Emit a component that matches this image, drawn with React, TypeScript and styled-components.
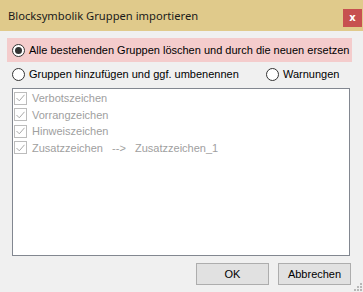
import React from 'react';
import styled, { createGlobalStyle } from 'styled-components';

const GlobalStyle = createGlobalStyle`
  html, body {
    margin: 0;
    padding: 0;
    background: #f0f0f0;
  }
  * {
    box-sizing: border-box;
  }
`;

const Window = styled.div`
  position: relative;
  width: 363px;
  height: 292px;
  display: flex;
  flex-direction: column;
  background: #f0f0f0;
  font-family: 'Liberation Sans', Arial, sans-serif;
  font-size: 11px;
  color: #000;
  overflow: hidden;
`;

const TitleBar = styled.div`
  height: 31px;
  display: flex;
  align-items: center;
  justify-content: space-between;
  padding-left: 8px;
  padding-right: 1px;
  background: #e0ca8b;
`;

const Title = styled.span`
  font-family: 'Noto Sans', 'Open Sans', sans-serif;
  font-size: 11.2px;
  color: #1a1a1a;
  margin-top: -1px;
`;

const CloseButton = styled.button`
  width: 19px;
  height: 18px;
  margin-top: 5px;
  border: none;
  padding: 0;
  background: #c75050;
  color: #fff;
  font-family: 'DejaVu Sans', sans-serif;
  font-weight: bold;
  font-size: 10px;
  line-height: 18px;
  text-align: center;
`;

const Body = styled.div`
  flex: 1;
  display: flex;
  flex-direction: column;
  padding: 7px 11px 0 7px;
`;

const OptionRow = styled.div<{ $highlight?: boolean }>`
  height: 24px;
  display: flex;
  align-items: center;
  padding-left: 5px;
  background: ${(p) => (p.$highlight ? '#f4cccc' : 'transparent')};
`;

const RadioLabel = styled.label<{ $width?: number }>`
  display: flex;
  align-items: center;
  gap: 4px;
  white-space: nowrap;
  width: ${(p) => (p.$width ? `${p.$width}px` : 'auto')};
`;

const RadioCircle = styled.span<{ $checked?: boolean }>`
  width: 13px;
  height: 13px;
  flex: none;
  border-radius: 50%;
  border: 1px solid #333;
  background: #fff;
  display: flex;
  align-items: center;
  justify-content: center;
  &::after {
    content: '';
    width: 7px;
    height: 7px;
    border-radius: 50%;
    background: ${(p) => (p.$checked ? '#333' : 'transparent')};
  }
`;

const ListBox = styled.div`
  margin-top: 2px;
  margin-left: 5px;
  width: 338px;
  height: 168px;
  border: 1px solid #828790;
  background: #fff;
  padding: 1px 0 0 1px;
  display: flex;
  flex-direction: column;
`;

const ListItem = styled.div`
  height: 16.5px;
  display: flex;
  align-items: center;
  gap: 5px;
  color: #a0a0a0;
  white-space: pre;
`;

const CheckBox = styled.span`
  width: 13px;
  height: 13px;
  flex: none;
  border: 1px solid #bcbcbc;
  background: #fff;
  display: flex;
  align-items: center;
  justify-content: center;
`;

const ButtonRow = styled.div`
  display: flex;
  justify-content: flex-end;
  gap: 9px;
  margin-top: 7px;
  padding-right: 1px;
`;

const DialogButton = styled.button`
  width: 73px;
  height: 22px;
  border: 1px solid #adadad;
  background: #e1e1e1;
  font-family: 'Liberation Sans', Arial, sans-serif;
  font-size: 11px;
  color: #000;
  padding: 0;
`;

const Grip = styled.svg`
  position: absolute;
  right: 1px;
  bottom: 1px;
`;

const RadioOption = ({
  label,
  checked,
  width,
}: {
  label: string;
  checked?: boolean;
  width?: number;
}) => (
  <RadioLabel $width={width}>
    <RadioCircle $checked={checked} />
    {label}
  </RadioLabel>
);

const items = [
  'Verbotszeichen',
  'Vorrangzeichen',
  'Hinweiszeichen',
  'Zusatzzeichen   -->   Zusatzzeichen_1',
];

export default function App() {
  return (
    <>
      <GlobalStyle />
      <Window>
        <TitleBar>
          <Title>Blocksymbolik Gruppen importieren</Title>
          <CloseButton>x</CloseButton>
        </TitleBar>
        <Body>
          <OptionRow $highlight>
            <RadioOption
              label="Alle bestehenden Gruppen löschen und durch die neuen ersetzen"
              checked
            />
          </OptionRow>
          <OptionRow>
            <RadioOption label="Gruppen hinzufügen und ggf. umbenennen" width={254} />
            <RadioOption label="Warnungen" />
          </OptionRow>
          <ListBox>
            {items.map((item) => (
              <ListItem key={item}>
                <CheckBox>
                  <svg width="9" height="8" viewBox="0 0 9 8">
                    <path d="M0.5 4 L3.3 6.8 L8.5 0.8" fill="none" stroke="#a8a8a8" strokeWidth="1" />
                  </svg>
                </CheckBox>
                {item}
              </ListItem>
            ))}
          </ListBox>
          <ButtonRow>
            <DialogButton>OK</DialogButton>
            <DialogButton>Abbrechen</DialogButton>
          </ButtonRow>
        </Body>
        <Grip width="10" height="10" viewBox="0 0 10 10">
          {[
            [8, 2],
            [8, 5],
            [8, 8],
            [5, 5],
            [5, 8],
            [2, 8],
          ].map(([x, y]) => (
            <rect key={`${x}-${y}`} x={x} y={y} width="2" height="2" fill="#b8b8b8" />
          ))}
        </Grip>
      </Window>
    </>
  );
}
